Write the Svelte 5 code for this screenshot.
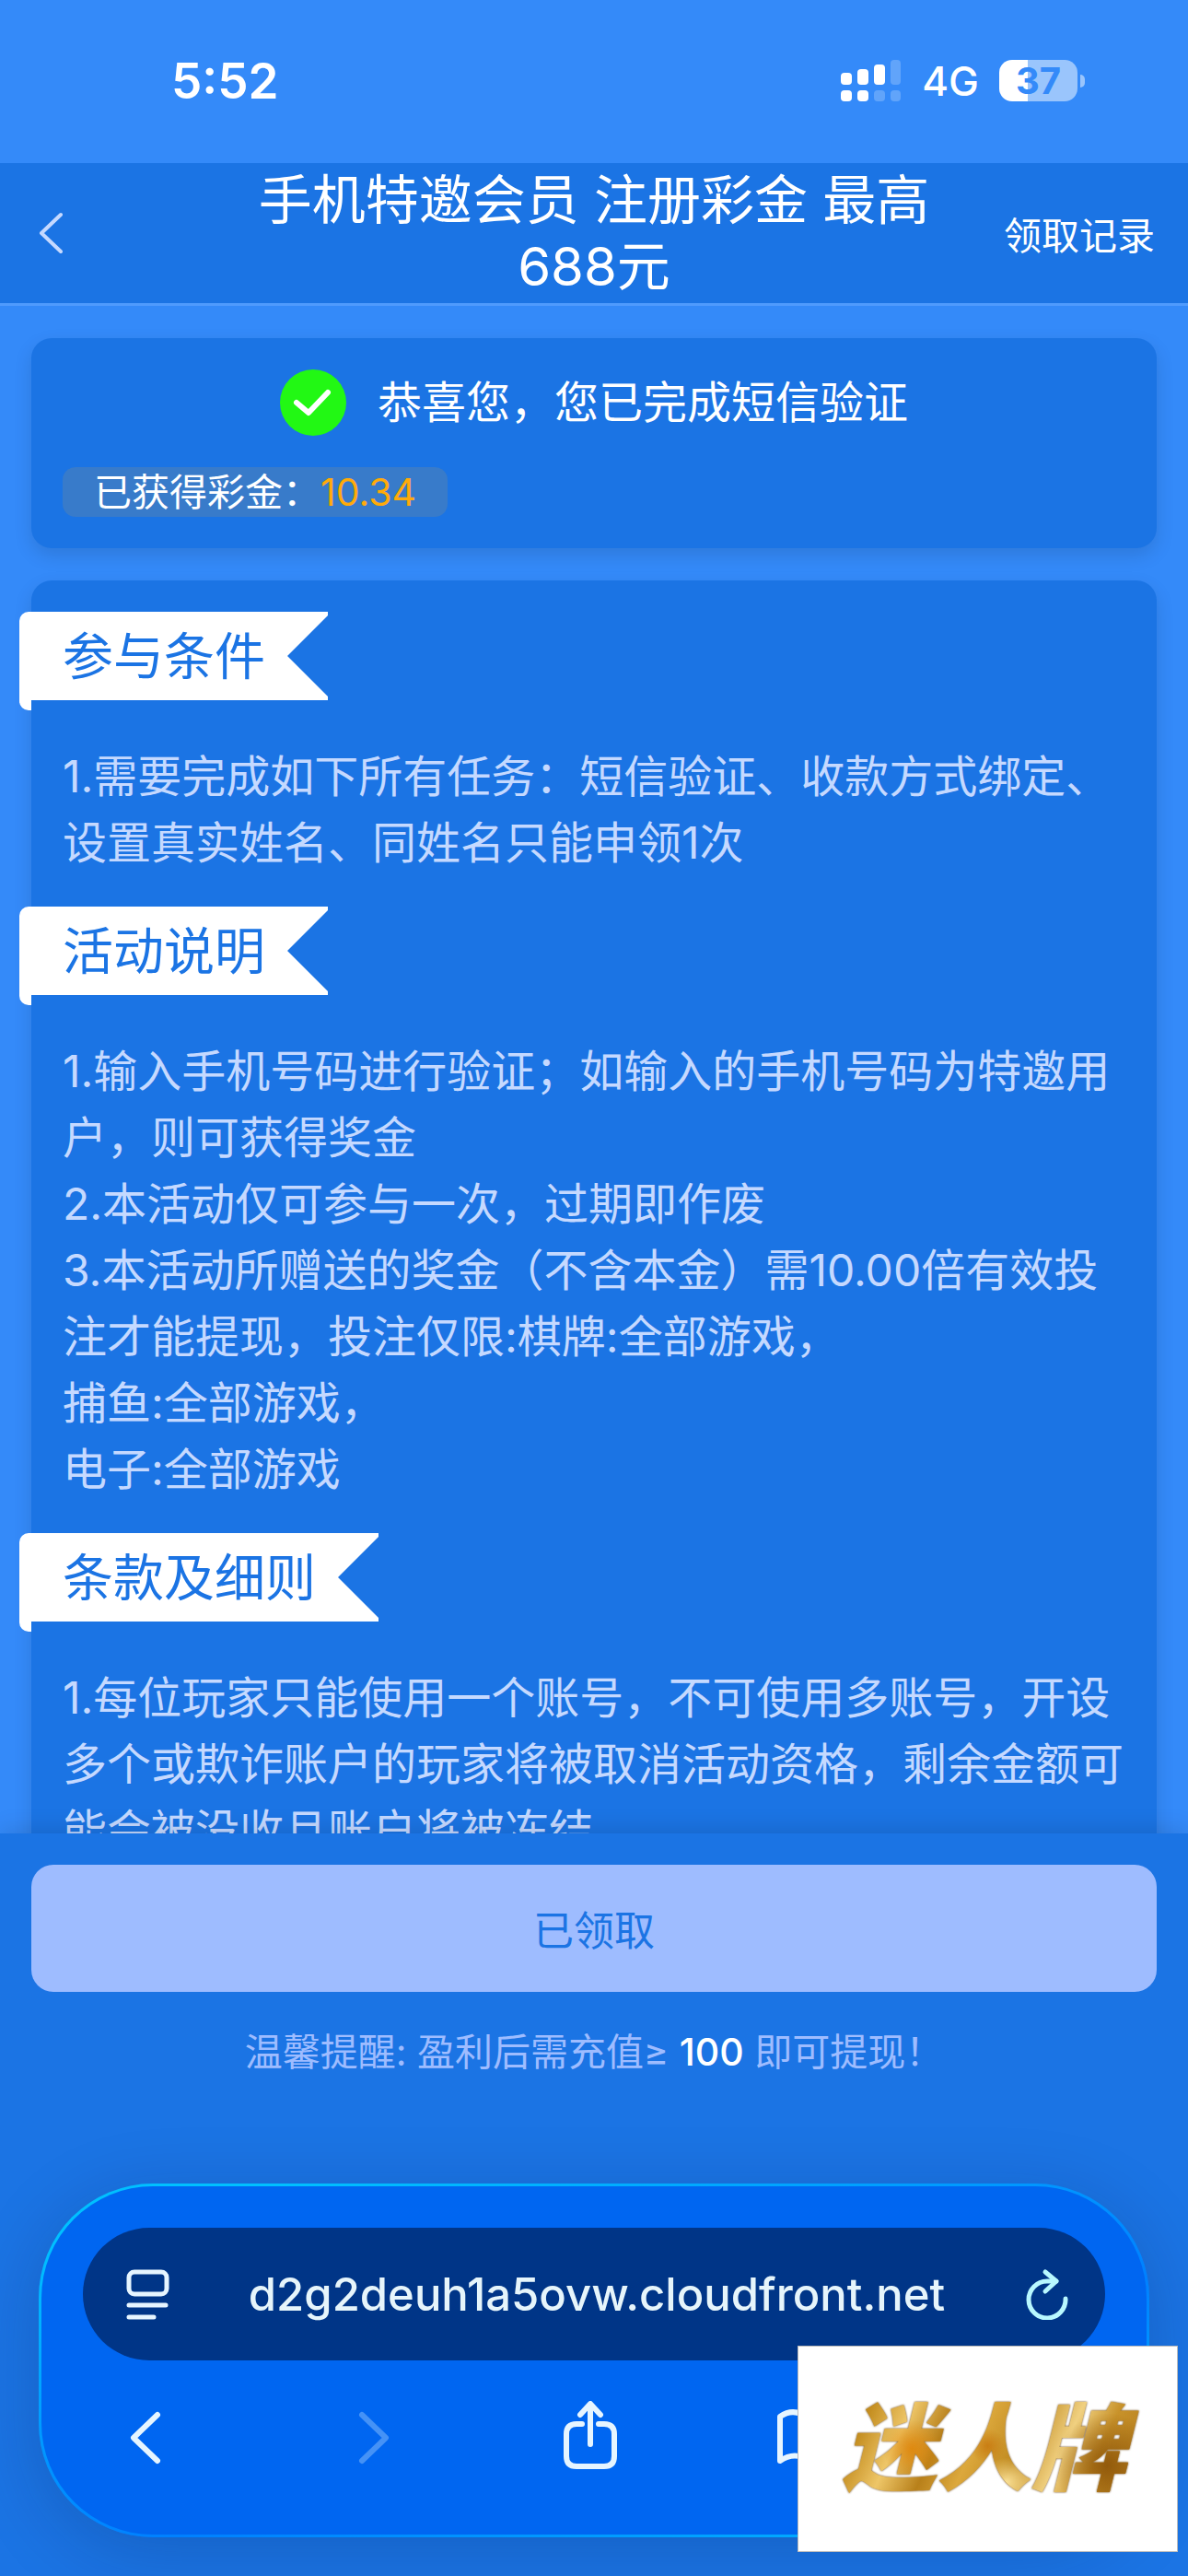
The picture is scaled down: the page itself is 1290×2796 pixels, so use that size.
<script lang="ts">
    const title = "手机特邀会员 注册彩金 最高688元"
    const bonus = "10.34"
    const minDeposit = 100
    const host = "d2g2deuh1a5ovw.cloudfront.net"

    type section = { heading: string, lines: string[] }

    const sections: section[] = [
        {
            heading: "参与条件",
            lines: ["1.需要完成如下所有任务：短信验证、收款方式绑定、设置真实姓名、同姓名只能申领1次"]
        },
        {
            heading: "活动说明",
            lines: [
                "1.输入手机号码进行验证；如输入的手机号码为特邀用户，则可获得奖金",
                "2.本活动仅可参与一次，过期即作废",
                "3.本活动所赠送的奖金（不含本金）需10.00倍有效投注才能提现，投注仅限:棋牌:全部游戏，",
                "捕鱼:全部游戏，",
                "电子:全部游戏"
            ]
        },
        {
            heading: "条款及细则",
            lines: ["1.每位玩家只能使用一个账号，不可使用多账号，开设多个或欺诈账户的玩家将被取消活动资格，剩余金额可能会被没收且账户将被冻结"]
        }
    ]
</script>

<div class="page" lang="zh-CN">
    <div class="status">
        <span class="time">5:52</span>
        <div class="indicators">
            <svg class="signal" viewBox="0 0 66 46" aria-hidden="true">
                <g fill="#fff">
                    <rect x="0" y="14" width="12" height="13" rx="4" />
                    <rect x="18" y="10" width="12" height="17" rx="4" />
                    <rect x="36" y="5" width="12" height="22" rx="4" />
                    <rect x="0" y="33" width="12" height="12" rx="4" />
                    <rect x="18" y="33" width="12" height="12" rx="4" />
                </g>
                <g fill="#fff" opacity=".22">
                    <rect x="54" y="0" width="11" height="27" rx="4" />
                    <rect x="36" y="33" width="12" height="12" rx="4" />
                    <rect x="54" y="33" width="11" height="12" rx="4" />
                </g>
            </svg>
            <span class="network">4G</span>
            <div class="battery"><span>37</span></div>
        </div>
    </div>

    <header>
        <button class="back" aria-label="返回">
            <svg viewBox="0 0 30 48"><path d="M26 4 5 24 26 44" /></svg>
        </button>
        <h1>{title}</h1>
        <a href="#records">领取记录</a>
    </header>

    <main>
        <section class="card verified">
            <div class="message">
                <svg viewBox="0 0 72 72" aria-hidden="true">
                    <circle cx="36" cy="36" r="36" fill="#22f814" />
                    <path d="M18 36 31 47 52 25" fill="none" stroke="#fff" stroke-width="6" stroke-linecap="round" stroke-linejoin="round" />
                </svg>
                <span>恭喜您，您已完成短信验证</span>
            </div>
            <p class="bonus">已获得彩金：<b>{bonus}</b></p>
        </section>

        <section class="card rules">
            {#each sections as section}
                <h2>{section.heading}</h2>
                <div class="text">
                    {#each section.lines as line}
                        <p>{line}</p>
                    {/each}
                </div>
            {/each}
        </section>
    </main>

    <footer>
        <button class="claim">已领取</button>
        <p class="hint">温馨提醒: 盈利后需充值≥ <b>{minDeposit}</b> 即可提现！</p>

        <nav class="browser">
            <div class="address">
                <button aria-label="页面菜单">
                    <svg viewBox="0 0 48 56">
                        <rect x="4" y="4" width="41" height="24" rx="6" />
                        <path d="M4 40H44M4 53H31" />
                    </svg>
                </button>
                <span>{host}</span>
                <button class="reload" aria-label="重新载入">
                    <svg viewBox="0 0 48 56">
                        <path d="M35 14H25A20 20 0 1 0 45 33" />
                        <path d="M23 4 35 14 23 25" />
                    </svg>
                </button>
            </div>
            <div class="tools">
                <button aria-label="后退">
                    <svg viewBox="0 0 80 80"><path d="M47 15 21 40 47 65" /></svg>
                </button>
                <button class="off" aria-label="前进" disabled>
                    <svg viewBox="0 0 80 80"><path d="M30 15 56 40 30 65" /></svg>
                </button>
                <button aria-label="分享">
                    <svg viewBox="0 0 80 80">
                        <path d="M31 25H25Q14 25 14 36V60Q14 71 25 71H55Q66 71 66 60V36Q66 25 55 25H49" />
                        <path d="M40 47V4M29 15 40 3 51 15" />
                    </svg>
                </button>
                <button aria-label="书签">
                    <svg viewBox="0 0 80 80">
                        <path d="M40 20Q24 6 8 17V65Q24 54 40 65Q56 54 72 65V17Q56 6 40 20V65" />
                    </svg>
                </button>
                <button aria-label="标签页">
                    <svg viewBox="0 0 80 80">
                        <rect x="12" y="24" width="44" height="44" rx="9" />
                        <path d="M25 12H58Q68 12 68 22V55" />
                    </svg>
                </button>
            </div>
        </nav>
    </footer>

    <div class="stamp"><strong>迷人牌</strong></div>
</div>

<style>
    :global(body) {
        background: #348af9;
    }

    .page {
        position: relative;
        display: flex;
        flex-direction: column;
        height: 100vh;
        overflow: hidden;
        background: #348af9;
        color: #fff;
        font-family: Inter, "Noto Sans CJK SC", sans-serif;
    }

    h1, h2, p {
        margin: 0;
        font-weight: 400;
    }

    button {
        padding: 0;
        border: 0;
        background: none;
        color: inherit;
        font: inherit;
    }

    svg {
        display: block;
    }

    .status {
        flex: none;
        display: flex;
        justify-content: space-between;
        align-items: center;
        height: 177px;
        padding: 0 120px 2px 186px;
        box-sizing: border-box;
    }
    .time {
        font-size: 53px;
        font-weight: 600;
    }
    .indicators {
        display: flex;
        align-items: center;
        gap: 22px;
    }
    .signal {
        width: 66px;
        height: 46px;
    }
    .network {
        font-size: 44px;
        font-weight: 500;
    }
    .battery {
        position: relative;
        width: 85px;
        height: 45px;
        border-radius: 14px;
        background: linear-gradient(90deg, #fff 36%, #9ac5fc 36%);
        color: #348af9;
        font-size: 40px;
        font-weight: 700;
        line-height: 45px;
        text-align: center;
    }
    .battery::after {
        content: "";
        position: absolute;
        right: -8px;
        top: 16px;
        width: 5px;
        height: 14px;
        border-radius: 0 5px 5px 0;
        background: #9ac5fc;
    }

    header {
        flex: none;
        display: grid;
        grid-template-columns: 240px 1fr 240px;
        align-items: center;
        padding: 4px 0;
        background: #1b74e4;
        border-bottom: 3px solid #4f9bfd;
    }
    header h1 {
        padding: 0 20px;
        font-size: 58px;
        line-height: 72px;
        text-align: center;
    }
    header a {
        justify-self: end;
        padding-right: 36px;
        color: #fff;
        font-size: 41px;
        text-decoration: none;
        white-space: nowrap;
    }
    .back {
        justify-self: start;
        margin-left: 40px;
    }
    .back svg {
        width: 30px;
        height: 48px;
        fill: none;
        stroke: #c5d9ff;
        stroke-width: 4;
        stroke-linecap: round;
        stroke-linejoin: round;
    }

    main {
        flex: 1;
        min-height: 0;
        overflow: hidden;
        display: flex;
        flex-direction: column;
        gap: 35px;
        padding: 35px 34px 0;
    }
    .card {
        flex: none;
        padding: 34px;
        border-radius: 22px;
        background: #1b74e4;
        box-shadow: 0 8px 20px rgba(0, 0, 0, .12);
    }
    .message {
        display: flex;
        justify-content: center;
        align-items: center;
        gap: 34px;
        font-size: 48px;
        line-height: 72px;
    }
    .message svg {
        width: 72px;
        height: 72px;
    }
    .bonus {
        width: fit-content;
        margin-top: 34px;
        padding: 0 34px;
        border-radius: 14px;
        background: #387bca;
        font-size: 41px;
        line-height: 54px;
    }
    .bonus b {
        color: #ffaa09;
        font-weight: 400;
    }

    /* the strip left of the card hangs 11px lower, like a folded ribbon */
    h2 {
        width: fit-content;
        margin-left: -47px;
        padding: 0 68px 11px 47px;
        border-radius: 10px 0 0 10px;
        background: #fff;
        clip-path: polygon(0 0, 100% 0, 100% 4px, calc(100% - 44px) 48px, 100% 92px, 100% 96px, 13px 96px, 13px 100%, 0 100%);
        color: #1b74e4;
        font-size: 55px;
        line-height: 96px;
    }
    .text {
        margin: 36px 0 33px;
        color: #c5d9ff;
        font-size: 48px;
        line-height: 72px;
        word-break: break-all;
    }

    footer {
        flex: none;
        position: relative;
        display: flex;
        flex-direction: column;
        padding: 34px 34px 42px;
        background: #1b74e4;
        box-shadow: 0 -4px 24px rgba(0, 0, 0, .12);
    }
    .claim {
        height: 138px;
        border-radius: 24px;
        background: #9ebcff;
        color: #1b74e4;
        font-size: 44px;
    }
    .hint {
        margin-top: 34px;
        color: #9ebcff;
        font-size: 41px;
        line-height: 62px;
        text-align: center;
    }
    .hint b {
        color: #fff;
        font-weight: 500;
    }

    .browser {
        margin: 112px 8px 0;
        border: 3px solid transparent;
        border-radius: 124px;
        background:
            linear-gradient(#0066f1, #0066f1) padding-box,
            linear-gradient(165deg, #00c0ff 10%, #0098ff 40%, #0080ff 60%, #00a8ff 85%) border-box;
        box-shadow: 0 16px 80px rgba(0, 20, 60, .2);
    }
    .address {
        display: flex;
        justify-content: space-between;
        align-items: center;
        height: 144px;
        margin: 45px 45px 0;
        padding: 0 40px 0 46px;
        border-radius: 72px;
        background: #003587;
        color: #e6f5fb;
        font-size: 49px;
        font-weight: 500;
    }
    .browser svg {
        fill: none;
        stroke: #e6f5ff;
        stroke-width: 6;
        stroke-linecap: round;
        stroke-linejoin: round;
    }
    .address svg {
        width: 48px;
        height: 56px;
        stroke-width: 5;
    }
    .address .reload svg {
        stroke: #b8f8ff;
    }
    .tools {
        display: grid;
        grid-template-columns: repeat(5, 1fr);
        justify-items: center;
        padding: 44px 8px 65px 0;
    }
    .tools svg {
        width: 80px;
        height: 80px;
    }
    .tools .off svg {
        stroke: #4592f6;
    }

    .stamp {
        position: absolute;
        right: 11px;
        bottom: 26px;
        display: grid;
        place-items: center;
        width: 411px;
        height: 222px;
        border: 1px solid #bbb;
        background: #fff;
    }
    .stamp strong {
        padding: 0 20px 0 12px;
        background:
            radial-gradient(circle at 56% 74%, rgba(255, 232, 160, .9), transparent 12%),
            radial-gradient(circle at 26% 50%, rgba(224, 134, 10, .9), transparent 12%),
            radial-gradient(circle at 50% 48%, rgba(200, 122, 16, .9), transparent 10%),
            radial-gradient(circle at 88% 62%, rgba(140, 84, 8, .9), transparent 18%),
            linear-gradient(115deg, #9c6a10, #c48d1f 14%, #eec668 25%, #b8801a 36%, #dca83c 46%, #c08a20 58%, #f0d080 70%, #c8922a 80%, #a87016);
        background-clip: text;
        color: transparent;
        filter: drop-shadow(0 0 1px #6b4208);
        font-size: 103px;
        font-style: italic;
        font-weight: 900;
        line-height: 150px;
    }
</style>
